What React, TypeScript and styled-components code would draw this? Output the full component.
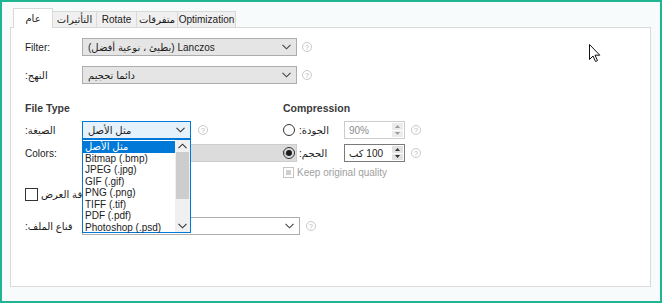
import styled, { createGlobalStyle } from "styled-components";

const GlobalStyle = createGlobalStyle`
  html, body {
    margin: 0;
    padding: 0;
    width: 662px;
    height: 303px;
    overflow: hidden;
    background: #ffffff;
  }
`;

const Frame = styled.div`
  position: relative;
  width: 662px;
  height: 303px;
  box-sizing: border-box;
  border: 2px solid #1fb592;
  background: #f8fbfb;
  padding: 6px 9px 14px 8px;
  display: flex;
  flex-direction: column;
  font-family: "Liberation Sans", "DejaVu Sans", sans-serif;
  font-size: 10px;
  color: #1b1b1b;
`;

const TabBar = styled.div`
  display: flex;
  align-items: flex-end;
  height: 20px;
  padding-left: 3px;
  margin-bottom: -1px;
  position: relative;
  z-index: 1;
`;

const Tab = styled.div<{ $active?: boolean; $w: number }>`
  width: ${(p) => p.$w}px;
  height: ${(p) => (p.$active ? 20 : 17)}px;
  box-sizing: border-box;
  display: flex;
  align-items: center;
  justify-content: center;
  background: ${(p) => (p.$active ? "#ffffff" : "#f0f0f0")};
  border: 1px solid #d9d9d9;
  border-bottom: ${(p) => (p.$active ? "none" : "1px solid #d9d9d9")};
  margin-left: ${(p) => (p.$active ? 0 : -1)}px;
  font-size: 10px;
  color: #1b1b1b;
  white-space: nowrap;
`;

const Panel = styled.div`
  flex: 1;
  background: #ffffff;
  border: 1px solid #dadada;
  padding: 10px 0 0 14px;
  position: relative;
`;

const Row = styled.div<{ $mt?: number }>`
  display: flex;
  align-items: center;
  height: 18px;
  margin-top: ${(p) => p.$mt ?? 0}px;
  position: relative;
`;

const Label = styled.div<{ $w: number }>`
  width: ${(p) => p.$w}px;
  flex: none;
  white-space: nowrap;
`;

const Rtl = styled.span`
  direction: rtl;
  unicode-bidi: isolate;
  display: inline-block;
`;

const Columns = styled.div`
  display: grid;
  grid-template-columns: 258px 1fr;
  margin-top: 17px;
`;

const Column = styled.div`
  display: flex;
  flex-direction: column;
`;

const Heading = styled.div`
  font-weight: bold;
  font-size: 10.5px;
  color: #3a3a3a;
  height: 14px;
  line-height: 14px;
  margin-bottom: 6px;
`;

type Look = "gray" | "white" | "focus" | "disabled";

const SelectBox = styled.div<{ $w: number; $look: Look }>`
  width: ${(p) => p.$w}px;
  height: 18px;
  box-sizing: border-box;
  flex: none;
  display: flex;
  align-items: center;
  justify-content: space-between;
  padding: 0 5px 0 5px;
  position: relative;
  border: 1px solid
    ${(p) =>
      p.$look === "focus" ? "#0078d7" : p.$look === "disabled" ? "#cccccc" : "#adadad"};
  background: ${(p) =>
    p.$look === "gray"
      ? "#e5e5e5"
      : p.$look === "focus"
        ? "#e5f1fb"
        : p.$look === "disabled"
          ? "#dcdcdc"
          : "#ffffff"};
  color: #1b1b1b;
  white-space: nowrap;
`;

const Chevron = ({ color = "#444", up }: { color?: string; up?: boolean }) => (
  <svg width="9" height="6" viewBox="0 0 9 6">
    <polyline
      points={up ? "0.5,5.2 4.5,1.2 8.5,5.2" : "0.5,0.8 4.5,4.8 8.5,0.8"}
      fill="none"
      stroke={color}
      strokeWidth="1.1"
    />
  </svg>
);

const HelpIcon = styled.div<{ $ml: number }>`
  width: 10px;
  height: 10px;
  box-sizing: border-box;
  margin-left: ${(p) => p.$ml}px;
  border: 1px solid #c9c9c9;
  border-radius: 50%;
  display: flex;
  align-items: center;
  justify-content: center;
  font-size: 7px;
  line-height: 1;
  color: #b4b4b4;
  flex: none;
`;

const DropList = styled.div`
  position: absolute;
  left: 57px;
  top: 18px;
  width: 109px;
  height: 94px;
  box-sizing: border-box;
  border: 1px solid #0078d7;
  background: #ffffff;
  z-index: 5;
  display: flex;
`;

const Items = styled.div`
  flex: 1;
  display: flex;
  flex-direction: column;
  padding-top: 1px;
`;

const Item = styled.div<{ $selected?: boolean }>`
  height: 11.5px;
  line-height: 11.5px;
  padding-left: 2px;
  font-size: 10px;
  background: ${(p) => (p.$selected ? "#0078d7" : "transparent")};
  color: ${(p) => (p.$selected ? "#ffffff" : "#1b1b1b")};
  white-space: nowrap;
`;

const ScrollBar = styled.div`
  width: 15px;
  background: #f0f0f0;
  display: flex;
  flex-direction: column;
  align-items: center;
`;

const ScrollArrow = styled.div`
  height: 12px;
  display: flex;
  align-items: center;
  justify-content: center;
`;

const Thumb = styled.div`
  width: 13px;
  height: 47px;
  background: #cdcdcd;
`;

const Spacer = styled.div`
  flex: 1;
`;

const CheckRow = styled.div<{ $mt: number; $disabled?: boolean }>`
  display: flex;
  align-items: center;
  gap: 3px;
  height: 14px;
  margin-top: ${(p) => p.$mt}px;
  color: ${(p) => (p.$disabled ? "#a0a0a0" : "#1b1b1b")};
  white-space: nowrap;
`;

const CheckBox = styled.div<{ $size: number; $disabled?: boolean }>`
  width: ${(p) => p.$size}px;
  height: ${(p) => p.$size}px;
  box-sizing: border-box;
  border: 1px solid ${(p) => (p.$disabled ? "#c4c4c4" : "#333333")};
  background: #ffffff;
  flex: none;
  display: flex;
  align-items: center;
  justify-content: center;
`;

const CheckFill = styled.div`
  width: 5px;
  height: 5px;
  background: #cfcfcf;
`;

const Radio = styled.div<{ $checked?: boolean }>`
  width: 12px;
  height: 12px;
  box-sizing: border-box;
  border: 1px solid #333333;
  border-radius: 50%;
  flex: none;
  display: flex;
  align-items: center;
  justify-content: center;
  margin-right: 4px;

  &::after {
    content: "";
    display: ${(p) => (p.$checked ? "block" : "none")};
    width: 6px;
    height: 6px;
    border-radius: 50%;
    background: #1b1b1b;
  }
`;

const SpinBox = styled.div<{ $disabled?: boolean }>`
  width: 61px;
  height: 18px;
  box-sizing: border-box;
  flex: none;
  display: flex;
  align-items: stretch;
  border: 1px solid ${(p) => (p.$disabled ? "#cccccc" : "#7a7a7a")};
  background: #ffffff;
  color: ${(p) => (p.$disabled ? "#8c8c8c" : "#1b1b1b")};
`;

const SpinText = styled.div`
  flex: 1;
  display: flex;
  align-items: center;
  padding-left: 4px;
`;

const SpinButtons = styled.div`
  width: 11px;
  margin: 1px;
  display: flex;
  flex-direction: column;
  gap: 1px;
`;

const SpinButton = styled.div<{ $disabled?: boolean }>`
  flex: 1;
  background: ${(p) => (p.$disabled ? "#ececec" : "#e1e1e1")};
  display: flex;
  align-items: center;
  justify-content: center;
`;

const Cursor = styled.svg`
  position: absolute;
  left: 587px;
  top: 42px;
`;

const Tri = ({ up, color }: { up?: boolean; color: string }) => (
  <svg width="5" height="3" viewBox="0 0 5 3">
    <polygon points={up ? "0,3 2.5,0 5,3" : "0,0 2.5,3 5,0"} fill={color} />
  </svg>
);

const formats = [
  "Bitmap (.bmp)",
  "JPEG (.jpg)",
  "GIF (.gif)",
  "PNG (.png)",
  "TIFF (.tif)",
  "PDF (.pdf)",
  "Photoshop (.psd)",
];

export default function App() {
  return (
    <>
      <GlobalStyle />
      <Frame>
        <TabBar>
          <Tab $active $w={40}>عام</Tab>
          <Tab $w={45}>التأثيرات</Tab>
          <Tab $w={41}>Rotate</Tab>
          <Tab $w={42}>متفرقات</Tab>
          <Tab $w={59}>Optimization</Tab>
        </TabBar>
        <Panel>
          <Row>
            <Label $w={57}>Filter:</Label>
            <SelectBox $w={215} $look="gray">
              <span>(بطيئ ، نوعية أفضل) Lanczos</span>
              <Chevron />
            </SelectBox>
            <HelpIcon $ml={5}>?</HelpIcon>
          </Row>
          <Row $mt={10}>
            <Label $w={57}>
              <Rtl>النهج:</Rtl>
            </Label>
            <SelectBox $w={215} $look="gray">
              <Rtl>دائما تحجيم</Rtl>
              <Chevron />
            </SelectBox>
            <HelpIcon $ml={5}>?</HelpIcon>
          </Row>

          <Columns>
            <Column>
              <Heading>File Type</Heading>
              <Row>
                <Label $w={57}>
                  <Rtl>الصيغة:</Rtl>
                </Label>
                <SelectBox $w={109} $look="focus">
                  <Rtl>مثل الأصل</Rtl>
                  <Chevron color="#333" />
                </SelectBox>
                <HelpIcon $ml={7}>?</HelpIcon>
                <DropList>
                  <Items>
                    <Item $selected>
                      <Rtl>مثل الأصل</Rtl>
                    </Item>
                    {formats.map((f) => (
                      <Item key={f}>{f}</Item>
                    ))}
                  </Items>
                  <ScrollBar>
                    <ScrollArrow>
                      <Chevron color="#333" up />
                    </ScrollArrow>
                    <Thumb />
                    <Spacer />
                    <ScrollArrow>
                      <Chevron color="#333" />
                    </ScrollArrow>
                  </ScrollBar>
                </DropList>
              </Row>
              <Row $mt={5}>
                <Label $w={57}>Colors:</Label>
                <SelectBox $w={215} $look="disabled">
                  <span />
                  <Chevron color="#a8a8a8" />
                </SelectBox>
              </Row>
              <CheckRow $mt={25}>
                <CheckBox $size={13} />
                <Rtl>دقة العرض</Rtl>
              </CheckRow>
              <Row $mt={16}>
                <Label $w={57}>
                  <Rtl>قناع الملف:</Rtl>
                </Label>
                <SelectBox $w={218} $look="white">
                  <span />
                  <Chevron />
                </SelectBox>
                <HelpIcon $ml={6}>?</HelpIcon>
              </Row>
            </Column>

            <Column>
              <Heading>Compression</Heading>
              <Row>
                <Radio />
                <Label $w={45}>
                  <Rtl>الجودة:</Rtl>
                </Label>
                <SpinBox $disabled>
                  <SpinText>90%</SpinText>
                  <SpinButtons>
                    <SpinButton $disabled>
                      <Tri up color="#9a9a9a" />
                    </SpinButton>
                    <SpinButton $disabled>
                      <Tri color="#9a9a9a" />
                    </SpinButton>
                  </SpinButtons>
                </SpinBox>
                <HelpIcon $ml={6}>?</HelpIcon>
              </Row>
              <Row $mt={5}>
                <Radio $checked />
                <Label $w={45}>
                  <Rtl>الحجم:</Rtl>
                </Label>
                <SpinBox>
                  <SpinText>
                    <Rtl>100 كب</Rtl>
                  </SpinText>
                  <SpinButtons>
                    <SpinButton>
                      <Tri up color="#333" />
                    </SpinButton>
                    <SpinButton>
                      <Tri color="#333" />
                    </SpinButton>
                  </SpinButtons>
                </SpinBox>
                <HelpIcon $ml={6}>?</HelpIcon>
              </Row>
              <CheckRow $mt={3} $disabled>
                <CheckBox $size={11} $disabled>
                  <CheckFill />
                </CheckBox>
                <span>Keep original quality</span>
              </CheckRow>
            </Column>
          </Columns>
        </Panel>
        <Cursor width="12" height="19" viewBox="0 0 12 19">
          <path
            d="M0.5 0.5 L0.5 15.5 L4 12 L6.5 17.5 L8.5 16.6 L6 11.2 L10.8 11.2 Z"
            fill="#ffffff"
            stroke="#111111"
            strokeWidth="1"
            strokeLinejoin="round"
          />
        </Cursor>
      </Frame>
    </>
  );
}
